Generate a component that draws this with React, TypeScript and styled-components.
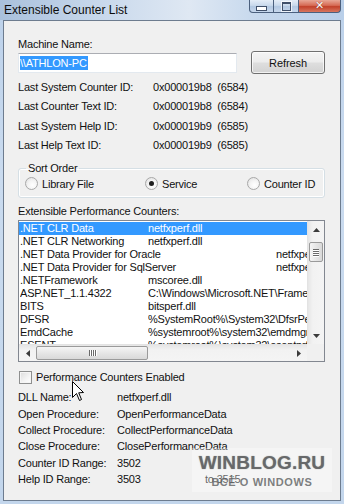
import styled, { createGlobalStyle } from "styled-components";

const GlobalStyle = createGlobalStyle`
  html, body {
    margin: 0;
    padding: 0;
    width: 344px;
    height: 504px;
    overflow: hidden;
  }
  body {
    font-family: "Liberation Sans", Arial, sans-serif;
    color: #111;
  }
`;

const Window = styled.div`
  position: relative;
  width: 344px;
  height: 504px;
  box-sizing: border-box;
  display: flex;
  flex-direction: column;
  padding: 0 3px 3px;
  background: linear-gradient(180deg, #bcd1ea 0%, #cadbef 35%, #c3d6ec 100%);
`;

const TitleBar = styled.div`
  height: 20px;
  flex-shrink: 0;
  display: flex;
  align-items: flex-start;
  margin: 0 -3px;
  padding: 0 3px;
  background: linear-gradient(
    90deg,
    #a9c0dc 0%,
    #c9d9ec 30%,
    #dfe8f3 55%,
    #c6d8ed 75%,
    #b9cfe9 100%
  );
`;

const Title = styled.div`
  font-size: 12px;
  line-height: 21px;
  padding-left: 1px;
  color: #0c0c0c;
`;

const Controls = styled.div`
  margin-left: auto;
  display: flex;
  height: 13px;
`;

const CtrlButton = styled.div<{ $w: number; $kind: "min" | "max" | "close" }>`
  width: ${(p) => p.$w}px;
  height: 13px;
  box-sizing: border-box;
  border: 1px solid #4b607e;
  border-top: none;
  border-left: ${(p) => (p.$kind === "min" ? "1px solid #4b607e" : "none")};
  border-radius: ${(p) =>
    p.$kind === "min" ? "0 0 0 4px" : p.$kind === "close" ? "0 0 4px 0" : "0"};
  display: flex;
  align-items: center;
  justify-content: center;
  background: ${(p) =>
    p.$kind === "close"
      ? "linear-gradient(180deg, #e8a796 0%, #d66b55 45%, #c2412a 55%, #d8765f 100%)"
      : "linear-gradient(180deg, #e4edf7 0%, #c9d9ec 45%, #b3c8e2 55%, #c7d8ed 100%)"};
`;

const MinGlyph = styled.div`
  width: 9px;
  height: 3px;
  margin-top: 4px;
  background: #fff;
  border: 1px solid #40506a;
`;

const MaxGlyph = styled.div`
  width: 7px;
  height: 6px;
  border: 1px solid #40506a;
  border-top-width: 2px;
  background: transparent;
  outline: 1px solid rgba(255, 255, 255, 0.7);
`;

const CloseGlyph = styled.div`
  color: #fff;
  font-family: "DejaVu Sans", sans-serif;
  font-weight: bold;
  font-size: 11px;
  line-height: 12px;
  text-shadow: 0 0 1px #6a1a0e;
`;

const Client = styled.div`
  flex: 1;
  box-sizing: border-box;
  border: 1px solid #6d7c8f;
  background: #f0f0f0;
  padding: 16px 15px 0 14px;
  display: flex;
  flex-direction: column;
`;

const Label = styled.div`
  font-size: 11px;
  line-height: 14px;
  letter-spacing: -0.2px;
  white-space: nowrap;
`;

const InputRow = styled.div`
  display: flex;
  align-items: center;
  height: 23px;
  gap: 14px;
`;

const TextBox = styled.div`
  width: 219px;
  height: 20px;
  box-sizing: border-box;
  background: #fff;
  border: 1px solid #e3e9ef;
  border-top-color: #abadb3;
  display: flex;
  align-items: center;
  padding-left: 1px;
`;

const Selected = styled.span`
  background: #3399ff;
  color: #fff;
  font-size: 11px;
  line-height: 14px;
  letter-spacing: -0.2px;
  padding-right: 1px;
`;

const Button = styled.div`
  width: 74px;
  height: 23px;
  box-sizing: border-box;
  border: 1px solid #707070;
  border-radius: 3px;
  background: linear-gradient(180deg, #f4f4f4 0%, #ececec 48%, #dedede 52%, #d2d2d2 100%);
  box-shadow: inset 0 0 0 1px rgba(255, 255, 255, 0.7);
  display: flex;
  align-items: center;
  justify-content: center;
  font-size: 11px;
  letter-spacing: -0.1px;
`;

const InfoList = styled.div`
  margin-top: 3px;
  display: flex;
  flex-direction: column;
`;

const InfoRow = styled.div<{ $h: number; $col: number }>`
  display: grid;
  grid-template-columns: ${(p) => p.$col}px auto 1fr;
  align-items: center;
  height: ${(p) => p.$h}px;
  font-size: 11px;
  letter-spacing: -0.2px;
  white-space: nowrap;
`;

const Value = styled.span<{ $w?: number }>`
  white-space: pre;
  width: ${(p) => (p.$w ? `${p.$w}px` : "auto")};
`;

const GroupBox = styled.fieldset`
  margin: 6px 0 0 0;
  padding: 0 6px 5px 6px;
  border: 1px solid #d5dfe5;
  border-radius: 3px;
  box-shadow: inset 0 0 0 1px #fff;
`;

const Legend = styled.legend`
  font-size: 11px;
  line-height: 14px;
  letter-spacing: -0.2px;
  padding: 0 2px;
  margin-left: 1px;
`;

const RadioRow = styled.div`
  display: grid;
  grid-template-columns: 120px 102px 1fr;
  height: 17px;
  align-items: center;
`;

const RadioItem = styled.label`
  display: flex;
  align-items: center;
  gap: 4px;
  font-size: 11px;
  letter-spacing: -0.2px;
  white-space: nowrap;
`;

const RadioCircle = styled.span<{ $checked?: boolean }>`
  width: 13px;
  height: 13px;
  box-sizing: border-box;
  border-radius: 50%;
  border: 1px solid #a8a8a8;
  background: radial-gradient(circle at 60% 65%, #ffffff 0%, #f4f4f4 45%, #dcdcdc 100%);
  display: flex;
  align-items: center;
  justify-content: center;
  &::after {
    content: "";
    display: ${(p) => (p.$checked ? "block" : "none")};
    width: 5px;
    height: 5px;
    border-radius: 50%;
    background: #1e1e1e;
  }
`;

const ListCaption = styled(Label)`
  margin-top: 6px;
`;

const ListBox = styled.div`
  margin-top: 2px;
  height: 142px;
  box-sizing: border-box;
  border: 1px solid #828790;
  background: #fff;
  display: grid;
  grid-template-columns: 1fr 17px;
  grid-template-rows: 1fr 17px;
  overflow: hidden;
`;

const Rows = styled.div`
  overflow: hidden;
  padding-top: 1px;
`;

const Row = styled.div<{ $selected?: boolean; $tab: number }>`
  display: grid;
  grid-template-columns: ${(p) => p.$tab}px 1fr;
  height: 13px;
  line-height: 13px;
  font-size: 11px;
  letter-spacing: -0.2px;
  padding-left: 1px;
  white-space: nowrap;
  overflow: hidden;
  background: ${(p) => (p.$selected ? "#3399ff" : "transparent")};
  color: ${(p) => (p.$selected ? "#fff" : "#111")};
  & > span {
    overflow: hidden;
  }
`;

const VScroll = styled.div`
  background: linear-gradient(90deg, #e6e6e6 0%, #f2f2f2 30%, #f4f4f4 100%);
  border-left: 1px solid #e3e3e3;
  display: flex;
  flex-direction: column;
  align-items: center;
`;

const HScroll = styled.div`
  background: linear-gradient(180deg, #e6e6e6 0%, #f2f2f2 30%, #f4f4f4 100%);
  border-top: 1px solid #e3e3e3;
  display: flex;
  align-items: center;
`;

const Corner = styled.div`
  background: #f0f0f0;
`;

const ArrowBox = styled.div<{ $size: number }>`
  width: ${(p) => p.$size}px;
  height: ${(p) => p.$size}px;
  flex-shrink: 0;
  display: flex;
  align-items: center;
  justify-content: center;
`;

const VThumb = styled.div`
  margin-top: 4px;
  width: 14px;
  height: 20px;
  box-sizing: border-box;
  border: 1px solid #9a9a9a;
  border-radius: 2px;
  background: linear-gradient(90deg, #f5f5f5 0%, #e6e6e6 50%, #d9d9d9 100%);
  display: flex;
  flex-direction: column;
  align-items: center;
  justify-content: center;
  gap: 1px;
`;

const HThumb = styled.div`
  width: 112px;
  height: 14px;
  box-sizing: border-box;
  border: 1px solid #9a9a9a;
  border-radius: 2px;
  background: linear-gradient(180deg, #f5f5f5 0%, #e6e6e6 50%, #d9d9d9 100%);
  display: flex;
  align-items: center;
  justify-content: center;
  gap: 1px;
`;

const Grip = styled.span<{ $vertical?: boolean }>`
  display: block;
  background: #6a6a6a;
  width: ${(p) => (p.$vertical ? "6px" : "1px")};
  height: ${(p) => (p.$vertical ? "1px" : "6px")};
  box-shadow: ${(p) => (p.$vertical ? "0 1px 0 #fff" : "1px 0 0 #fff")};
`;

const Spacer = styled.div`
  flex: 1;
`;

const CheckRow = styled.label`
  margin-top: 8px;
  display: flex;
  align-items: center;
  gap: 4px;
  height: 14px;
  font-size: 11px;
  letter-spacing: -0.2px;
  padding-left: 1px;
`;

const CheckBox = styled.span`
  width: 13px;
  height: 13px;
  box-sizing: border-box;
  border: 1px solid #8e8f8f;
  background: linear-gradient(135deg, #dcdcdc 0%, #f4f4f4 60%, #ffffff 100%);
  box-shadow: inset 0 0 0 1px #f5f5f5;
`;

const Details = styled.div`
  margin-top: 5px;
  display: flex;
  flex-direction: column;
`;

const Watermark = styled.div`
  position: absolute;
  left: 192px;
  top: 448px;
  width: 140px;
  height: 44px;
  background: rgba(255, 255, 255, 0.35);
  display: flex;
  flex-direction: column;
  align-items: center;
  pointer-events: none;
`;

const WmBig = styled.div`
  font-family: "Liberation Sans", Arial, sans-serif;
  font-weight: bold;
  font-size: 19px;
  line-height: 20px;
  margin-top: 5px;
  color: rgba(92, 94, 96, 0.8);
  letter-spacing: 0.2px;
  text-shadow: 0 0 1px rgba(90, 90, 90, 0.7);
`;

const WmSmall = styled.div`
  font-family: "Liberation Sans", Arial, sans-serif;
  font-weight: bold;
  font-size: 11px;
  line-height: 14px;
  margin-top: 2px;
  color: rgba(92, 94, 96, 0.8);
  letter-spacing: 0.6px;
`;

const Cursor = styled.svg`
  position: absolute;
  left: 72px;
  top: 381px;
`;

const UpArrow = () => (
  <svg width="7" height="4" viewBox="0 0 7 4">
    <path d="M3.5 0 L7 4 L0 4 Z" fill="#3b3b3b" />
  </svg>
);
const DownArrow = () => (
  <svg width="7" height="4" viewBox="0 0 7 4">
    <path d="M0 0 L7 0 L3.5 4 Z" fill="#3b3b3b" />
  </svg>
);
const LeftArrow = () => (
  <svg width="4" height="7" viewBox="0 0 4 7">
    <path d="M4 0 L4 7 L0 3.5 Z" fill="#3b3b3b" />
  </svg>
);
const RightArrow = () => (
  <svg width="4" height="7" viewBox="0 0 4 7">
    <path d="M0 0 L4 3.5 L0 7 Z" fill="#3b3b3b" />
  </svg>
);

const info = [
  ["Last System Counter ID:", "0x000019b8  (6584)"],
  ["Last Counter Text ID:", "0x000019b8  (6584)"],
  ["Last System Help ID:", "0x000019b9  (6585)"],
  ["Last Help Text ID:", "0x000019b9  (6585)"],
];

const counters = [
  { name: ".NET CLR Data", lib: "netfxperf.dll" },
  { name: ".NET CLR Networking", lib: "netfxperf.dll" },
  { name: ".NET Data Provider for Oracle", lib: "netfxperf.dll", tab: 256 },
  { name: ".NET Data Provider for SqlServer", lib: "netfxperf.dll", tab: 256 },
  { name: ".NETFramework", lib: "mscoree.dll" },
  { name: "ASP.NET_1.1.4322", lib: "C:\\Windows\\Microsoft.NET\\Framework\\v1.1.4322\\aspnet_isapi.dll" },
  { name: "BITS", lib: "bitsperf.dll" },
  { name: "DFSR", lib: "%SystemRoot%\\System32\\DfsrPerf.dll" },
  { name: "EmdCache", lib: "%systemroot%\\system32\\emdmgmt.dll" },
  { name: "ESENT", lib: "%systemroot%\\system32\\esentprf.dll" },
];

const details = [
  ["DLL Name:", "netfxperf.dll", ""],
  ["Open Procedure:", "OpenPerformanceData", ""],
  ["Collect Procedure:", "CollectPerformanceData", ""],
  ["Close Procedure:", "ClosePerformanceData", ""],
  ["Counter ID Range:", "3502", ""],
  ["Help ID Range:", "3503", "to 3515"],
];

export default function App() {
  return (
    <Window>
      <GlobalStyle />
      <TitleBar>
        <Title>Extensible Counter List</Title>
        <Controls>
          <CtrlButton $w={25} $kind="min">
            <MinGlyph />
          </CtrlButton>
          <CtrlButton $w={25} $kind="max">
            <MaxGlyph />
          </CtrlButton>
          <CtrlButton $w={42} $kind="close">
            <CloseGlyph>✕</CloseGlyph>
          </CtrlButton>
        </Controls>
      </TitleBar>

      <Client>
        <Label>Machine Name:</Label>
        <InputRow>
          <TextBox>
            <Selected>{"\\\\ATHLON-PC"}</Selected>
          </TextBox>
          <Button>Refresh</Button>
        </InputRow>

        <InfoList>
          {info.map(([k, v]) => (
            <InfoRow key={k} $h={19.5} $col={135}>
              <span>{k}</span>
              <Value>{v}</Value>
            </InfoRow>
          ))}
        </InfoList>

        <GroupBox>
          <Legend>Sort Order</Legend>
          <RadioRow>
            <RadioItem>
              <RadioCircle />
              Library File
            </RadioItem>
            <RadioItem>
              <RadioCircle $checked />
              Service
            </RadioItem>
            <RadioItem>
              <RadioCircle />
              Counter ID
            </RadioItem>
          </RadioRow>
        </GroupBox>

        <ListCaption>Extensible Performance Counters:</ListCaption>
        <ListBox>
          <Rows>
            {counters.map((c, i) => (
              <Row key={c.name} $selected={i === 0} $tab={c.tab ?? 128}>
                <span>{c.name}</span>
                <span>{c.lib}</span>
              </Row>
            ))}
          </Rows>
          <VScroll>
            <ArrowBox $size={17}>
              <UpArrow />
            </ArrowBox>
            <VThumb>
              <Grip $vertical />
              <Grip $vertical />
              <Grip $vertical />
              <Grip $vertical />
            </VThumb>
            <Spacer />
            <ArrowBox $size={17}>
              <DownArrow />
            </ArrowBox>
          </VScroll>
          <HScroll>
            <ArrowBox $size={17}>
              <LeftArrow />
            </ArrowBox>
            <HThumb>
              <Grip />
              <Grip />
              <Grip />
              <Grip />
            </HThumb>
            <Spacer />
            <ArrowBox $size={17}>
              <RightArrow />
            </ArrowBox>
          </HScroll>
          <Corner />
        </ListBox>

        <CheckRow>
          <CheckBox />
          Performance Counters Enabled
        </CheckRow>

        <Details>
          {details.map(([k, v, extra]) => (
            <InfoRow key={k} $h={16.4} $col={99}>
              <span>{k}</span>
              <Value $w={88}>{v}</Value>
              <Value>{extra}</Value>
            </InfoRow>
          ))}
        </Details>
      </Client>

      <Watermark>
        <WmBig>WINBLOG.RU</WmBig>
        <WmSmall>ВСЁ О WINDOWS</WmSmall>
      </Watermark>

      <Cursor width="13" height="21" viewBox="0 0 13 21">
        <path
          d="M0.5 0.5 L0.5 16.5 L4.5 12.5 L7.5 19.5 L9.5 18.5 L6.7 11.8 L11.5 11.5 Z"
          fill="#fff"
          stroke="#000"
          strokeWidth="1"
          strokeLinejoin="miter"
        />
      </Cursor>
    </Window>
  );
}
